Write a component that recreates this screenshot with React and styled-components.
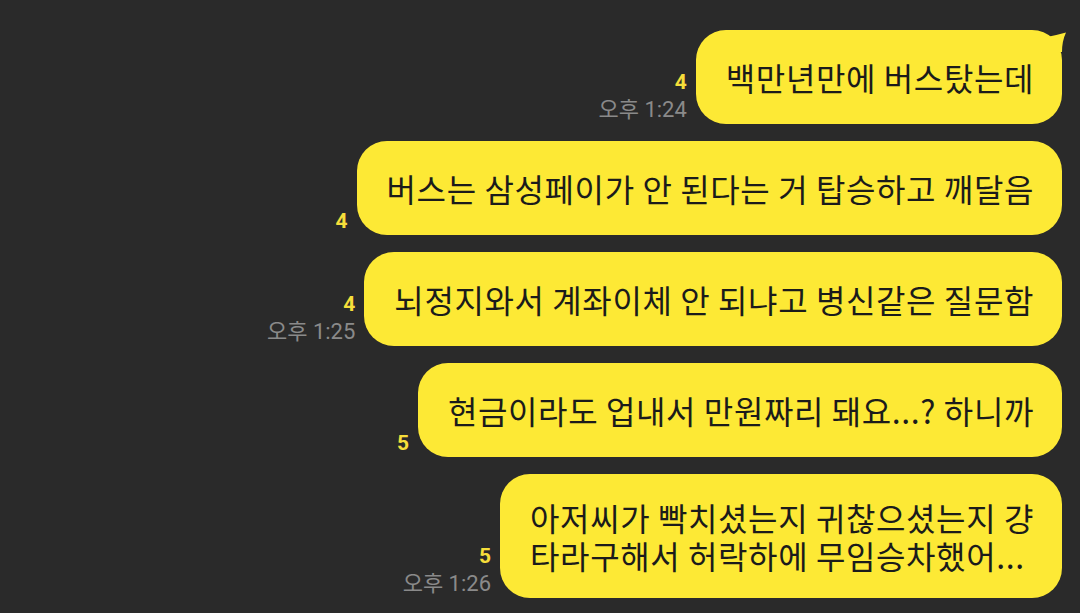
import React from 'react';
import styled, { createGlobalStyle } from 'styled-components';

const GlobalStyle = createGlobalStyle`
  html, body {
    margin: 0;
    padding: 0;
    background: #2a2a2a;
  }
  body {
    font-family: "Noto Sans CJK KR", "Noto Sans", sans-serif;
  }
`;

const Screen = styled.div`
  width: 1080px;
  height: 613px;
  box-sizing: border-box;
  padding: 30px 18px 0 0;
  background: #2a2a2a;
  display: flex;
  flex-direction: column;
  gap: 17px;
  overflow: hidden;
`;

const Row = styled.div`
  display: flex;
  justify-content: flex-end;
  align-items: flex-end;
`;

const Meta = styled.div`
  display: flex;
  flex-direction: column;
  align-items: flex-end;
  margin-right: 9px;
`;

const Count = styled.span`
  color: #f6de3a;
  font-family: "Roboto", "Noto Sans", sans-serif;
  font-weight: 700;
  font-size: 21px;
  line-height: 28px;
`;

const Time = styled.span`
  color: #8a8a8a;
  font-family: "Roboto", "Noto Sans CJK KR", sans-serif;
  font-size: 22px;
  line-height: 28px;
`;

const Bubble = styled.div`
  position: relative;
  box-sizing: border-box;
  min-height: 94px;
  display: flex;
  align-items: center;
  background: #fde935;
  color: #1b1b1b;
  font-size: 32px;
  letter-spacing: 0.6px;
  line-height: 38px;
  padding: 24px 28px 24px 30px;
  border-radius: 30px;
  white-space: pre;
`;

const Tail = styled.svg`
  position: absolute;
  top: 0;
  right: -6px;
  width: 34px;
  height: 30px;
`;

const messages = [
  { text: '백만년만에 버스탔는데', count: 4, time: '오후 1:24', first: true },
  { text: '버스는 삼성페이가 안 된다는 거 탑승하고 깨달음', count: 4 },
  { text: '뇌정지와서 계좌이체 안 되냐고 병신같은 질문함', count: 4, time: '오후 1:25' },
  { text: '현금이라도 업내서 만원짜리 돼요...? 하니까', count: 5 },
  { text: '아저씨가 빡치셨는지 귀찮으셨는지 걍\n타라구해서 허락하에 무임승차했어...', count: 5, time: '오후 1:26' }
];

function Message({ text, count, time, first }) {
  return (
    <Row>
      <Meta>
        <Count>{count}</Count>
        {time && <Time>{time}</Time>}
      </Meta>
      <Bubble>
        {first && (
          <Tail viewBox="0 0 34 30">
            <path d="M13 7 Q23 5 32 2.5 Q28 11 28 22 L13 22 Z" fill="#fde935" />
          </Tail>
        )}
        {text}
      </Bubble>
    </Row>
  );
}

export default function App() {
  return (
    <>
      <GlobalStyle />
      <Screen>
        {messages.map((m, i) => (
          <Message key={i} {...m} />
        ))}
      </Screen>
    </>
  );
}
